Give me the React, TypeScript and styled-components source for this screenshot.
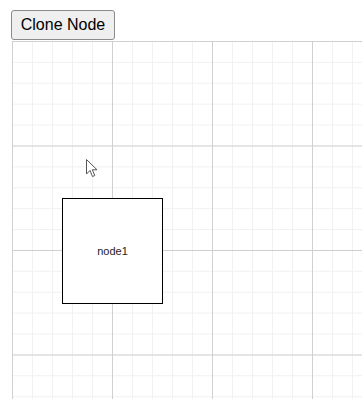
import React from "react";
import styled, { createGlobalStyle } from "styled-components";

const Global = createGlobalStyle`
  html, body { margin: 0; padding: 0; background: #fff; overflow: hidden; }
  body { font-family: "Liberation Sans", Arial, sans-serif; }
`;

const Page = styled.div`
  display: flex;
  flex-direction: column;
  align-items: flex-start;
  padding: 10px 0 0 11px;
  width: 362px;
  height: 399px;
  box-sizing: border-box;
`;

const Button = styled.button`
  font-family: "Liberation Sans", Arial, sans-serif;
  font-size: 16px;
  height: 30px;
  width: 104px;
  padding: 0;
  color: #000;
  background: #efefef;
  border: 1px solid #8a8a8a;
  border-radius: 3px;
`;

const Canvas = styled.div`
  position: relative;
  margin: 1px 0 0 1px;
  width: 360px;
  height: 360px;
  background-color: #fff;
  background-image:
    linear-gradient(to right, #d0d0d0 1px, transparent 1px),
    linear-gradient(to bottom, #d0d0d0 1px, transparent 1px),
    linear-gradient(to right, #f1f1f1 1px, transparent 1px),
    linear-gradient(to bottom, #f1f1f1 1px, transparent 1px);
  background-size: 100px 100px, 100px 104.5px, 20px 20px, 20px 20.9px;
`;

const Node = styled.div<{ $x: number; $y: number }>`
  position: absolute;
  left: ${(p) => p.$x}px;
  top: ${(p) => p.$y}px;
  width: 101px;
  height: 106px;
  box-sizing: border-box;
  border: 1px solid #000;
  background: #fff;
  display: flex;
  align-items: center;
  justify-content: center;
  font-size: 11px;
  color: #222;
`;

const Cursor = styled.svg`
  position: absolute;
  left: 74px;
  top: 118px;
`;

export default function App() {
  return (
    <>
      <Global />
      <Page>
        <Button>Clone Node</Button>
        <Canvas>
          <Node $x={50} $y={157}>node1</Node>
          <Cursor width="14" height="20" viewBox="0 0 14 20">
            <path
              d="M0.5 0.5 L0.5 15 L4 11.5 L6.5 17.5 L8.8 16.5 L6.3 10.8 L11 10.8 Z"
              fill="#fff"
              stroke="#555"
              strokeWidth="1"
              strokeLinejoin="round"
            />
          </Cursor>
        </Canvas>
      </Page>
    </>
  );
}
